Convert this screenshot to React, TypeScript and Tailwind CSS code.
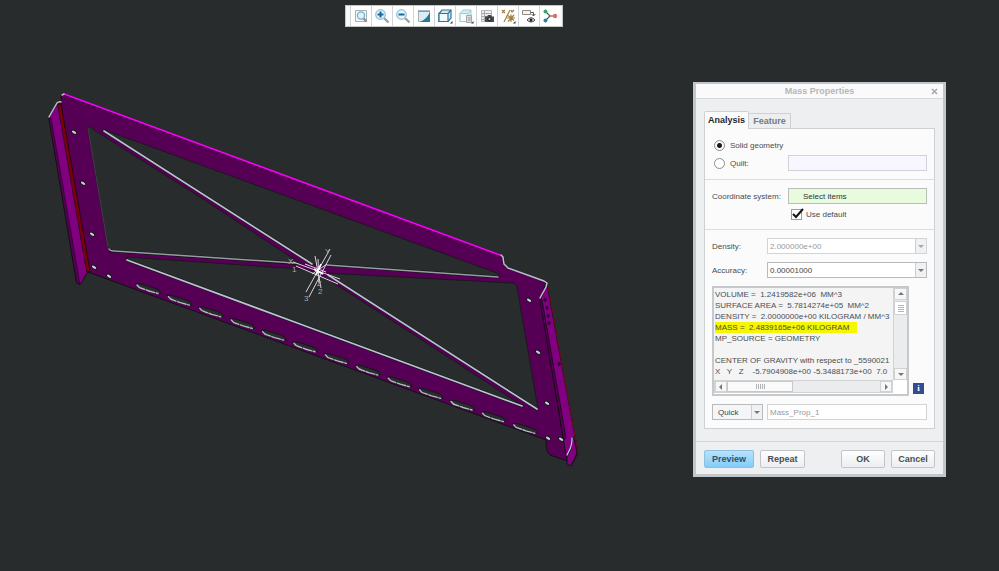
import type { ReactNode } from "react";

const slots = Array.from({ length: 13 }, (_, i) => ({
  x: 136 + i * 31.4,
  y: 283 + i * 11.65,
}));

const holes = [
  [74, 132], [83, 183], [92, 234], [94, 267], [109, 276],
  [529, 300], [538, 352], [547, 403], [548, 438], [561, 439],
];

const rightHoles = [[545, 300], [547, 308], [548, 316], [549, 323], [559, 364]];

function Model() {
  return (
    <svg className="absolute left-0 top-0" width="620" height="500" viewBox="0 0 620 500" role="img" aria-label="Frame model">
      <g strokeLinejoin="round" strokeLinecap="round">
        <path d="M49 117L58 103H62L90 271L87 273L80 285L77 283Z" fill="#800080" stroke="#121212" />
        <path d="M49 117L51 118L80 284L77 283Z" fill="#550055" stroke="#1a0a1a" strokeWidth=".6" />
        <path d="M62 94L501 255L504 258L505 266L546 282L541 299L566 437L570 462L550 455Q546 453 546 440L88 272L61 104Z" fill="#550055" stroke="#121212" />
        <path d="M58 104H61L90 271L87 272Z" fill="#7b0008" stroke="#140606" strokeWidth=".7" />
        <path d="M49 117L57 103Q59 101 61 102" fill="none" stroke="#b8c2ca" strokeWidth="1.5" />

        <g fill="#282c2c" stroke="#151717" strokeWidth=".8">
          <path d="M105 130L497 273Q500 275 499 277L326 265L313 264L103 131Z" />
          <path d="M88 127Q89 125 94 130L200 197L303 265L112 251Q109 250 108 247Z" />
          <path d="M127 257L300 269L316 272L362 301L520 404Q524 407 520 406L300 324L127 260Z" />
          <path d="M325 273L400 277L512 283Q516 283 517 287L538 409L380 308Z" />
        </g>
        <path d="M88 128L108 247" stroke="#484c4c" fill="none" strokeWidth=".8" />
        <g fill="none" stroke="#111414" strokeWidth="2.6">
          <path d="M104 131L312 264M110 251L295 263M327 265L498 277M127 260L300 324L522 406M328 275L537 409" />
        </g>
        <g fill="none" stroke="#b8c4cf" strokeWidth="1.7">
          <path d="M104 131L312 264M127 260L300 324L522 406M328 275L537 409" />
          <path d="M109 249Q110 251 114 251L295 263M327 265L498 277" stroke="#959ea2" strokeWidth="1.5" />
        </g>
        <path d="M64 94L500 255" stroke="#f800f8" strokeWidth="1.6" />

        <path d="M547 284L578 453L571 466L567 462L541 299Z" fill="#800080" stroke="#121212" />
        <path d="M540 299L542 300L566 438L564 440Z" fill="#550055" stroke="#160816" strokeWidth=".8" />
        <path d="M548 286L578 453" stroke="#64131b" strokeWidth="1" />
        <path d="M62 95L64 94M501 255L503 257L504 264L508 268L544 281L547 283L546 287L540 298" fill="none" stroke="#b8c2ca" strokeWidth="1.5" />
        <path d="M572 438L571 449L567 457V464L571 466L577 453L574 438Z" fill="#800080" stroke="#161016" />
        <path d="M572 438Q572 446 569 451L567 455" fill="none" stroke="#b8c2ca" strokeWidth="1.3" />
        {rightHoles.map(([x, y]) => (
          <ellipse key={y} cx={x} cy={y} rx="1" ry="1.7" fill="#550055" stroke="#16081a" strokeWidth=".8" />
        ))}
        {holes.map(([x, y]) => (
          <g key={`${x}-${y}`} transform={`translate(${x} ${y}) rotate(30)`}>
            <ellipse rx="3.3" ry="2" fill="#141818" />
            <ellipse cx=".2" cy=".2" rx="2.4" ry="1.2" fill="#c4d2d6" />
          </g>
        ))}
        {slots.map((s) => (
          <g key={s.x} transform={`translate(${s.x} ${s.y})`}>
            <path d="M0 1Q1 0 5 1L18 5Q24 7 25 10Q23 11 19 10L6 6Q1 4 0 1Z" fill="#282c2c" stroke="#101212" strokeWidth=".8" />
            <path d="M1 2Q3 5 6 5.500L13 8L22 10.500" fill="none" stroke="#b2bcc1" strokeWidth="1.4" strokeDasharray="9 1.600" />
          </g>
        ))}
      </g>
      <g fill="none" stroke="#d8d3dc" strokeWidth="1">
        <path d="M293 262L340 279M296 266L338 284M330 249L306 292M331 255L309 297M315 256L321 288M318 259L319 283M305 264L326 272M312 274L327 264" />
        <path d="M314 269L323 274M316 275L321 264" stroke="#fff" strokeWidth="1.8" />
      </g>
      <g fill="#a9adad" fontFamily="Liberation Sans, sans-serif" fontSize="8">
        <text x="288" y="264">X</text>
        <text x="325" y="254">Y</text>
        <text x="317" y="286" fontSize="7">Z</text>
        <text x="292" y="272">1</text>
        <text x="318" y="294">2</text>
        <text x="304" y="301">3</text>
      </g>
    </svg>
  );
}

function Magnifier({ sign }: { sign?: "plus" | "minus" }) {
  return (
    <>
      <path d="M10 10L14.500 14.500" stroke="#9f9a96" strokeWidth="2.200" />
      <circle cx="6.500" cy="6.500" r="4.800" fill="#e4f3f9" stroke="#8cc3da" strokeWidth="1.200" />
      {sign && <path d="M3.500 6.500H9.500" stroke="#176a98" strokeWidth="2" />}
      {sign === "plus" && <path d="M6.500 3.500V9.500" stroke="#176a98" strokeWidth="2" />}
    </>
  );
}

const corner = <path d="M15.500 13V15.500H13Z" fill="#333" />;

const tools: { name: string; icon: ReactNode }[] = [
  {
    name: "Refit",
    icon: (
      <>
        <path d="M2.500 2.500H13.500V13.500H2.500Z" fill="#f3f5f5" stroke="#a9b1b3" />
        <path d="M10 10L13.500 13.500" stroke="#8b8683" strokeWidth="2" />
        <circle cx="8" cy="7.500" r="3.600" fill="#dff2fa" stroke="#6db2cf" strokeWidth="1.200" />
      </>
    ),
  },
  { name: "Zoom in", icon: <Magnifier sign="plus" /> },
  { name: "Zoom out", icon: <Magnifier sign="minus" /> },
  {
    name: "Repaint",
    icon: (
      <>
        <path d="M2.500 3.500H13.500V13.500H2.500Z" fill="#dcecf2" stroke="#a8b2b5" />
        <path d="M14 4V14H4Q11 11 14 4Z" fill="#28799b" />
        <path d="M2 3H14" stroke="#6c9caf" strokeWidth="1.400" />
      </>
    ),
  },
  {
    name: "Display style",
    icon: (
      <>
        <path d="M2 5.500L5 2H14V10L11 13.500H2Z" fill="#d5e9f1" stroke="#2b7797" strokeWidth="1.200" />
        <path d="M2 5.500H11V13.500H2ZM11 5.500L14 2" fill="#f2f9fb" stroke="#2b7797" strokeWidth="1.200" />
        {corner}
      </>
    ),
  },
  {
    name: "Saved orientations",
    icon: (
      <>
        <path d="M2 5.500L5 2H13V11L11 13.500H2Z" fill="#dcecf3" stroke="#9ccbdd" />
        <path d="M2 5.500H10V13.500H2ZM10 5.500L13 2" fill="#f6fbfc" stroke="#9ccbdd" />
        <path d="M8.500 7.500H13.500V14.500H8.500Z" fill="#dcdedf" stroke="#a3a8aa" />
        <path d="M10 10H12.500M10 12H12.500" stroke="#8c979b" />
        {corner}
      </>
    ),
  },
  {
    name: "View manager",
    icon: (
      <>
        <path d="M2.500 2.500H12.500V13.500H2.500Z" fill="#eee" stroke="#b5b7b8" />
        <path d="M3 5.500H12M3 8.500H12M3 11.500H7M5.500 3V13" stroke="#a3a8aa" />
        <path d="M6 8.500H8L9 7H12L13 8.500H15V14H6Z" fill="#4a4a4c" />
        <circle cx="10.500" cy="11" r="1.700" fill="#bbb" stroke="#111" />
      </>
    ),
  },
  {
    name: "Datum display",
    icon: (
      <>
        <path d="M2 2L5 5M5 2L2 5M10 2L4 14M8 7.500L14 12.500M14 7L8 13.500M11 6.500V14M7 10H15M11 2L12 4L14 2" stroke="#a0803f" strokeWidth="1.200" />
        {corner}
      </>
    ),
  },
  {
    name: "Annotation display",
    icon: (
      <>
        <path d="M1.500 2.500H9.500V6.500H1.500Z" fill="#fff3cf" stroke="#8b8b8b" />
        <path d="M10 4.500H12.500V8M10.500 6L12.500 8L14.500 6" fill="none" stroke="#555" />
        <path d="M6 12Q10 7.500 14 12Q10 16 6 12Z" fill="#eee" stroke="#444" />
        <circle cx="10" cy="12" r="1.500" fill="#222" />
      </>
    ),
  },
  {
    name: "Spin center",
    icon: (
      <>
        <path d="M3.500 3.500L8 8H13M8 8L3.500 12.500" fill="none" stroke="#555" strokeWidth="1.200" />
        <circle cx="3.500" cy="3.500" r="2" fill="#39a36a" />
        <circle cx="13" cy="8" r="2.200" fill="#df6c68" />
        <circle cx="3.500" cy="12.500" r="2" fill="#2680a8" />
      </>
    ),
  },
];

function Toolbar() {
  return (
    <div role="toolbar" aria-label="Graphics" className="absolute left-[345px] top-[5px] flex h-[22px] border border-[#c4c6c8] bg-[#f8f8f9] pl-1 pr-[2px]">
      {tools.map((t) => (
        <button key={t.name} type="button" aria-label={t.name} className="flex w-[21px] items-center justify-center border-l border-[#d2d4dc] bg-white">
          <svg width="16" height="16" viewBox="0 0 16 16" fill="none">{t.icon}</svg>
        </button>
      ))}
    </div>
  );
}

function Arrow({ dir = "down", dim = false }: { dir?: "up" | "down" | "left" | "right"; dim?: boolean }) {
  const shapes = { up: "M1 5H7L4 2Z", down: "M1 3H7L4 6Z", left: "M5 1V7L2 4Z", right: "M3 1V7L6 4Z" };
  return (
    <svg width="8" height="8" viewBox="0 0 8 8" aria-hidden="true">
      <path d={shapes[dir]} fill={dim ? "#a5a9ac" : "#74787b"} />
    </svg>
  );
}

function Select({ id, label, value, disabled = false, button = false }: { id: string; label?: string; value: string; disabled?: boolean; button?: boolean }) {
  return (
    <div className={`relative flex h-4 border ${disabled ? "border-[#d2d4d6]" : "border-[#b8bbbe]"} ${button ? "w-[51px]" : "w-40"}`}>
      <select
        id={id}
        aria-label={label}
        disabled={disabled}
        className={`min-w-0 flex-1 appearance-none opacity-100 outline-none ${button ? "bg-[#f4f5f6] pl-[5px] text-[#444]" : "bg-white pl-[2px]"} ${disabled ? "text-[#999]" : "text-[#444]"}`}
      >
        <option>{value}</option>
      </select>
      <span className="pointer-events-none absolute inset-y-0 right-0 flex w-[11px] items-center justify-center border-l border-[#cdd0d2] bg-[#f0f1f2]">
        <Arrow dim={disabled} />
      </span>
    </div>
  );
}

const scrollButton = "flex shrink-0 items-center justify-center border border-[#d0d2d4] bg-[#f7f7f8]";

function Results() {
  return (
    <div className="grid h-[110px] w-[197px] grid-cols-[1fr_14px] grid-rows-[1fr_13px] border-2 border-[#c6c9cb] bg-white pb-px">
      <div className="overflow-hidden whitespace-pre bg-[#f4f4f5] pl-px pt-px leading-[11px] text-[#4a4d50]">
        <div>VOLUME =  1.2419582e+06  MM^3</div>
        <div>SURFACE AREA =  5.7814274e+05  MM^2</div>
        <div>DENSITY =  2.0000000e+00 KILOGRAM / MM^3</div>
        <div><mark className="inline-block bg-[#f6f600] pr-2 text-[#4a4d30]">MASS =  2.4839165e+06 KILOGRAM</mark></div>
        <div>MP_SOURCE = GEOMETRY</div>
        <div> </div>
        <div>CENTER OF GRAVITY with respect to _5590021</div>
        <div>X   Y   Z    -5.7904908e+00 -5.3488173e+00  7.0</div>
      </div>
      <div className="flex flex-col border-l border-[#d0d2d4] bg-[#ebecee]">
        <button type="button" aria-label="Scroll up" className={`${scrollButton} h-3`}><Arrow dir="up" /></button>
        <div className="mt-px flex h-[14px] flex-col items-center justify-center gap-px border border-[#cfd1d3] bg-white">
          {[0, 1, 2, 3].map((i) => <i key={i} className="h-px w-[6px] bg-[#b5b7b9]" />)}
        </div>
        <button type="button" aria-label="Scroll down" className={`${scrollButton} mt-auto h-3`}><Arrow /></button>
      </div>
      <div className="flex border border-[#d0d2d4] bg-[#ebecee]">
        <button type="button" aria-label="Scroll left" className={`${scrollButton} w-3`}><Arrow dir="left" /></button>
        <div className="flex w-[66px] items-center justify-center gap-px border border-[#c6c8ca] bg-[#fafafa]">
          {[0, 1, 2, 3, 4].map((i) => <i key={i} className="h-[5px] w-px bg-[#b0b2b4]" />)}
        </div>
        <button type="button" aria-label="Scroll right" className={`${scrollButton} ml-auto w-3`}><Arrow dir="right" /></button>
      </div>
    </div>
  );
}

const actionButton = "h-[18px] rounded-[2px] border text-[9px] font-bold";
const plainButton = "border-[#c2c5c8] bg-linear-to-b from-white to-[#eceef0] text-[#4a4e52]";

function MassProperties() {
  return (
    <section aria-label="Mass Properties" className="absolute left-[693px] top-[82px] w-[253px] border-[3px] border-t-2 border-[#c1c7ca] bg-[#eeeff1] text-[8px] leading-[11px] text-[#484b4e]">
      <header className="relative flex h-[15px] items-center justify-center border-b border-[#d5dad9] bg-[#fafafa] text-[9px] font-bold text-[#b5b7b9]">
        <h1>Mass Properties</h1>
        <button type="button" aria-label="Close" className="absolute right-[5px] top-1">
          <svg width="7" height="7" viewBox="0 0 7 7"><path d="M1 1L6 6M6 1L1 6" stroke="#a9abad" strokeWidth="1.700" /></svg>
        </button>
      </header>

      <div className="px-2 pt-3">
        <div role="tablist" className="flex items-end text-[9px] font-bold">
          <button type="button" role="tab" aria-selected="true" className="relative -mb-px h-[18px] w-[45px] rounded-t-[2px] border border-b-0 border-[#cfd2d5] bg-[#fbfbfb] text-[#27292b]">Analysis</button>
          <button type="button" role="tab" aria-selected="false" className="h-[15px] w-[42px] border border-b-0 border-l-0 border-[#cfd2d5] bg-[#edeef0] text-[#777a7d]">Feature</button>
        </div>

        <div className="border border-[#cfd2d5] bg-[#fbfbfb]">
          <div className="flex flex-col gap-[2px] border-b border-[#dbdee0] px-[7px] py-2">
            <label className="flex h-4 items-center gap-[5px] pl-[2px]">
              <input type="radio" name="target" defaultChecked className="size-[11px] appearance-none rounded-full border border-[#8a8c8e] bg-white checked:bg-[radial-gradient(circle,#1c1c1c_2px,white_3px)]" />
              Solid geometry
            </label>
            <div className="flex h-4 items-center">
              <label className="flex flex-1 items-center gap-[5px] pl-[2px]">
                <input type="radio" name="target" className="size-[11px] appearance-none rounded-full border border-[#8a8c8e] bg-white" />
                Quilt:
              </label>
              <input aria-label="Quilt reference" className="h-4 w-[139px] border border-[#d2d3d7] bg-[#f8f6fe]" />
            </div>
          </div>

          <div className="border-b border-[#dbdee0] px-[7px] pb-[9px] pt-2">
            <div className="flex items-center justify-between">
              <label htmlFor="csys" className="whitespace-nowrap">Coordinate system:</label>
              <input id="csys" readOnly value="Select items" className="h-4 w-[139px] border border-[#b9bebb] bg-[#e8fbdc] pl-[14px] text-[#333]" />
            </div>
            <label className="ml-[79px] mt-1 flex h-3 items-center gap-1">
              <span className="relative flex">
                <input type="checkbox" defaultChecked className="size-[11px] appearance-none border border-[#9b9da0] bg-white" />
                <svg className="pointer-events-none absolute -top-px left-0" width="13" height="12" viewBox="0 0 13 12" fill="none"><path d="M2 6L5 9L12 1" stroke="#151515" strokeWidth="2" /></svg>
              </span>
              Use default
            </label>
          </div>

          <div className="flex flex-col gap-2 px-[7px] pb-2 pt-2">
            <div className="flex items-center justify-between">
              <label htmlFor="density">Density:</label>
              <Select id="density" value="2.000000e+00" disabled />
            </div>
            <div className="flex items-center justify-between">
              <label htmlFor="accuracy">Accuracy:</label>
              <Select id="accuracy" value="0.00001000" />
            </div>
            <div className="flex items-end gap-1">
              <Results />
              <button type="button" aria-label="Information" className="mb-[2px] flex size-[11px] items-center justify-center bg-[#344c91] font-['Liberation_Serif',serif] text-[9px] font-bold text-white">i</button>
            </div>
            <div className="flex items-center justify-between">
              <Select id="mode" label="Analysis mode" value="Quick" button />
              <input aria-label="Analysis name" defaultValue="Mass_Prop_1" className="h-4 w-40 border border-[#d0d2d4] bg-white pl-[2px] text-[#999]" />
            </div>
          </div>
        </div>
      </div>

      <footer className="mt-3 flex gap-[6px] border-t border-[#d3d6d9] px-2 pb-[6px] pt-2">
        <button type="button" className={`${actionButton} w-[50px] border-[#8fbfdc] bg-linear-to-b from-[#b7e2fb] to-[#83cdf8] text-[#315069]`}>Preview</button>
        <button type="button" className={`${actionButton} ${plainButton} w-[45px]`}>Repeat</button>
        <button type="button" className={`${actionButton} ${plainButton} ml-auto w-11`}>OK</button>
        <button type="button" className={`${actionButton} ${plainButton} w-11`}>Cancel</button>
      </footer>
    </section>
  );
}

export default function App() {
  return (
    <main className="relative min-h-screen overflow-hidden bg-[#282c2c] font-['Liberation_Sans',Arial,sans-serif]">
      <Model />
      <Toolbar />
      <MassProperties />
    </main>
  );
}
